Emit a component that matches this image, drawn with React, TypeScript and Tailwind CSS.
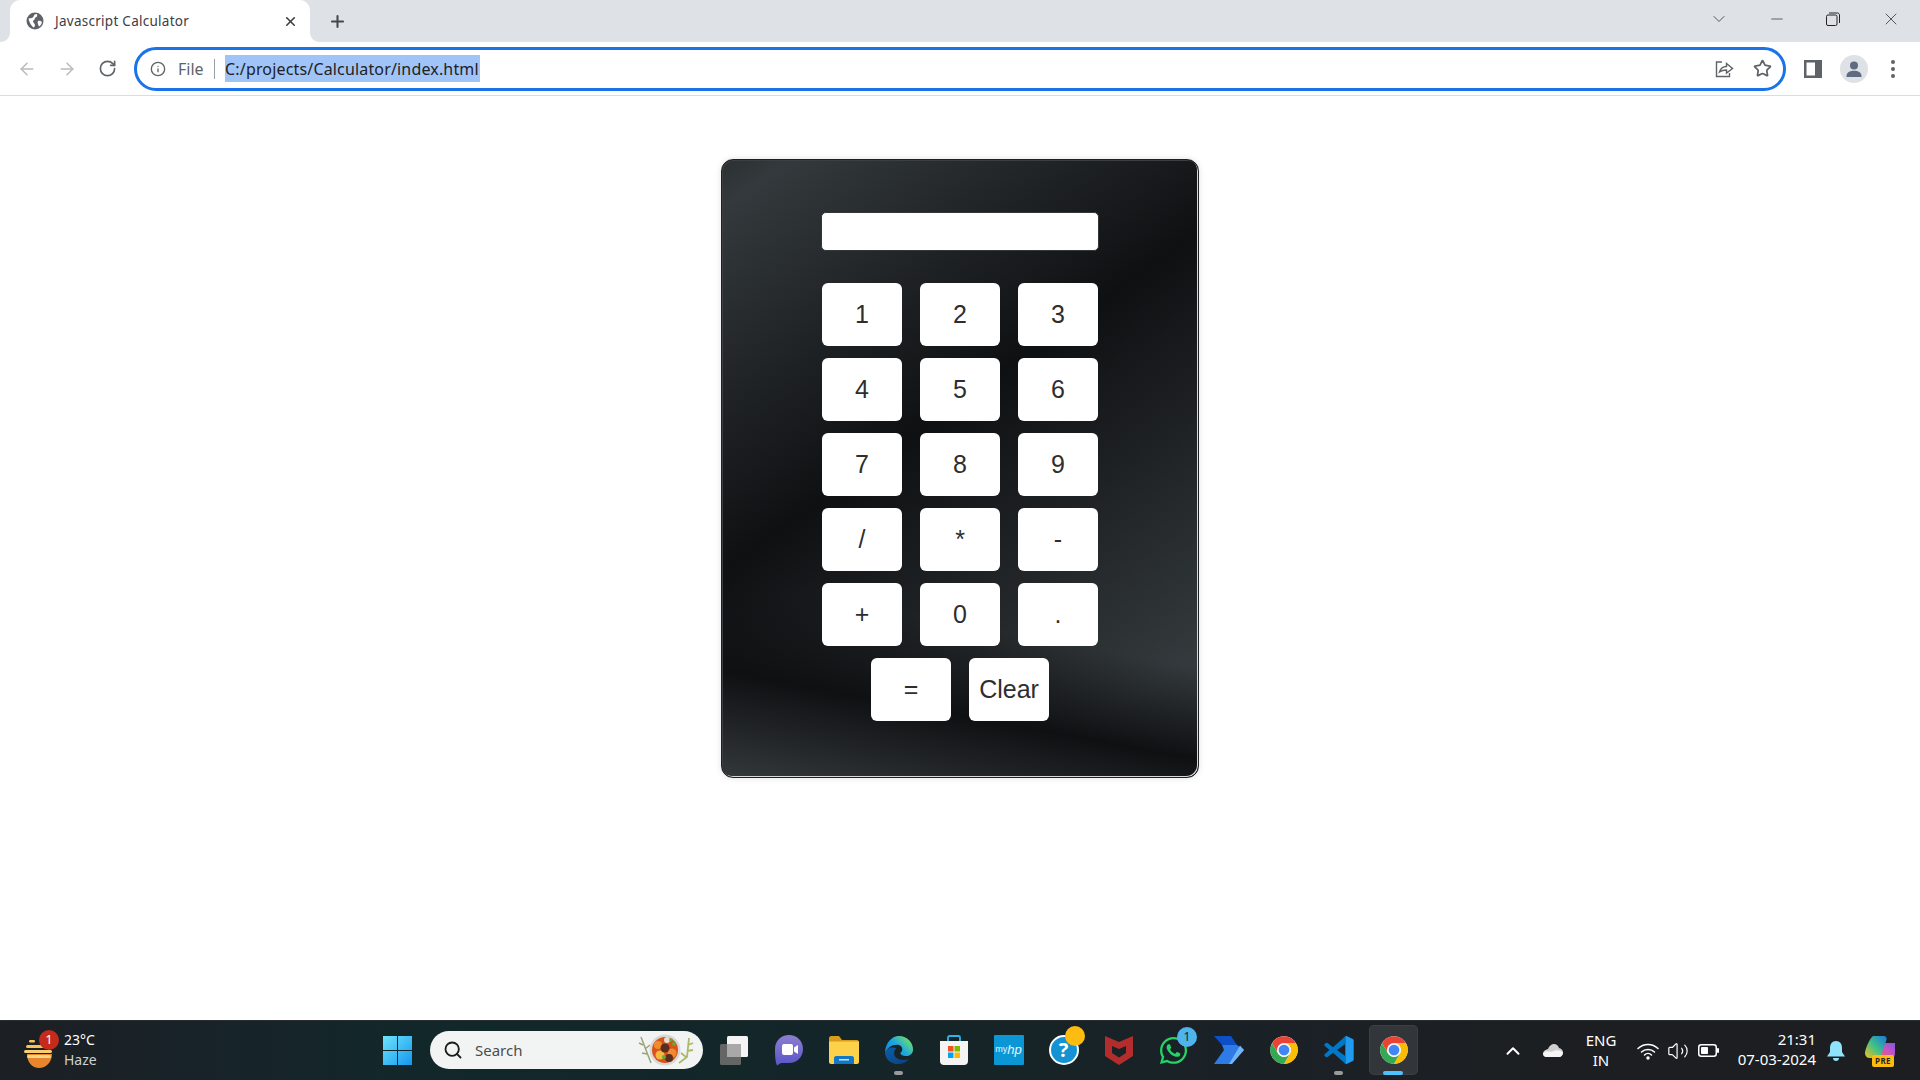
import { ArrowLeft, ArrowRight, RotateCw, Info, Star, ChevronDown, ChevronUp, Minus, X, Plus, Search, Volume2 } from "lucide-react";
import { FaWhatsapp } from "react-icons/fa";
import type { ReactNode } from "react";

const keys = ["1", "2", "3", "4", "5", "6", "7", "8", "9", "/", "*", "-", "+", "0", "."];

function Key({ label }: { label: string }) {
  return (
    <button className="w-[80px] h-[63px] rounded-[6px] bg-white text-[25px] text-[#2e2e2e] [font-family:'Liberation_Sans',Arial,sans-serif]">
      {label}
    </button>
  );
}

function Chrome({ size = 30 }: { size?: number }) {
  const red = "M24 2A22 22 0 0 1 43.05 13L24 13A11 11 0 0 0 14.47 29.5L4.95 13A22 22 0 0 1 24 2Z";
  return (
    <svg width={size} height={size} viewBox="0 0 48 48">
      <circle cx="24" cy="24" r="22" fill="#fff" />
      <path d={red} fill="#ea4335" />
      <path d={red} fill="#fbbc04" transform="rotate(120 24 24)" />
      <path d={red} fill="#34a853" transform="rotate(240 24 24)" />
      <circle cx="24" cy="24" r="11" fill="#f1f3f4" />
      <circle cx="24" cy="24" r="8.5" fill="#4285f4" />
    </svg>
  );
}

function Edge() {
  return (
    <svg width="30" height="30" viewBox="0 0 32 32">
      <defs>
        <linearGradient id="edgeA" x1="0" y1="1" x2="1" y2="0.3">
          <stop offset="0" stopColor="#0d79d0" />
          <stop offset="0.55" stopColor="#1fa7df" />
          <stop offset="1" stopColor="#6fe06a" />
        </linearGradient>
        <linearGradient id="edgeB" x1="0" y1="0" x2="1" y2="1">
          <stop offset="0" stopColor="#0c5ea8" />
          <stop offset="1" stopColor="#0b3f7f" />
        </linearGradient>
      </defs>
      <path d="M16 1C25 1 31 8 31 15.5C31 20 27.5 22.5 23.5 22.5C20 22.5 17.5 21 17.5 19.5C17.5 18.5 19.5 18 19.5 15.5C19.5 12 16.5 10.5 13.5 10.5C8 10.5 3.5 14 1 19.5C1 9 8 1 16 1Z" fill="url(#edgeA)" />
      <path d="M1 18C1 26 8 31 15 31C20 31 24 29 26.5 25.5C22 27 17 27 13.5 24.5C10 22 10 17 13 14C8 12 3 15 1 18Z" fill="url(#edgeB)" />
    </svg>
  );
}

function Store() {
  return (
    <svg width="30" height="32" viewBox="0 0 30 32">
      <path d="M9 8V3.5C9 2.5 9.8 2 10.5 2H19.5C20.2 2 21 2.5 21 3.5V8" fill="none" stroke="#2fb4ea" strokeWidth="1.8" />
      <path d="M1 7H29V27C29 29.5 27.5 31 25 31H5C2.5 31 1 29.5 1 27Z" fill="#f4f4f4" />
      <rect x="9" y="12" width="5.5" height="5.5" fill="#f25022" />
      <rect x="15.5" y="12" width="5.5" height="5.5" fill="#7fba00" />
      <rect x="9" y="18.5" width="5.5" height="5.5" fill="#00a4ef" />
      <rect x="15.5" y="18.5" width="5.5" height="5.5" fill="#ffb900" />
    </svg>
  );
}

function Tile({ children, dot, active }: { children: ReactNode; dot?: boolean; active?: boolean }) {
  return (
    <div className="relative w-[55px] h-[60px] flex items-center justify-center">
      {active && <div className="absolute left-[3px] top-[4px] w-[49px] h-[50px] rounded-[5px] bg-white/10 border border-white/5" />}
      <div className="relative flex items-center justify-center mt-[-1px]">{children}</div>
      {dot && <div className="absolute bottom-[6px] left-[23px] w-[9px] h-[4px] rounded-full bg-[#9a9a9a]" />}
      {active && <div className="absolute bottom-[6px] left-[17px] w-[20px] h-[4px] rounded-full bg-[#4cc2ff]" />}
    </div>
  );
}

export default function App() {
  return (
    <div className="w-[1920px] h-[1080px] flex flex-col overflow-hidden bg-white [font-family:'Noto_Sans',sans-serif]">
      {/* tab strip */}
      <div className="h-[42px] shrink-0 bg-[#dee1e6] flex items-end pl-[10px] text-[#202124]">
        <div className="relative w-[300px] h-[42px] mt-auto bg-white rounded-t-[10px] flex items-center">
          <svg className="absolute left-[-10px] bottom-0" width="10" height="10" viewBox="0 0 10 10"><path d="M10 0V10H0C6 10 10 6 10 0Z" fill="#fff" /></svg>
          <svg className="absolute right-[-10px] bottom-0" width="10" height="10" viewBox="0 0 10 10"><path d="M0 0V10H10C4 10 0 6 0 0Z" fill="#fff" /></svg>
          <svg className="ml-[16px]" width="18" height="18" viewBox="0 0 18 18">
            <circle cx="9" cy="9" r="8.5" fill="#5f6368" />
            <path d="M2.5 6.5L6 6C7 5.5 8 4 8.5 2.5L11 2C11.5 3.5 11 5 9.5 5.5C8.5 6 9 7.5 8 8C7 8.5 6.5 9 7.5 10.5C8 11.5 9 12 9 13.5L8 15.5C6 15 3.5 11 2.5 6.5Z" fill="#fff" />
            <path d="M12 9C13.5 8.5 15 9 16 10C15.5 12 14.5 13.5 13 14.5C12.5 13 11 11 12 9Z" fill="#fff" />
          </svg>
          <span className="ml-[11px] text-[13.5px] text-[#3c4043] tracking-[0.02em]">Javascript Calculator</span>
          <X className="ml-auto mr-[12px] text-[#3c4043]" size={15} strokeWidth={2.6} />
        </div>
        <div className="w-[56px] h-[42px] flex items-center justify-center">
          <Plus className="text-[#45484c] ml-[-1px]" size={19} strokeWidth={2.6} />
        </div>
        <div className="ml-auto h-[38px] self-start flex items-center text-[#3a3a3a]">
          <ChevronDown size={20} strokeWidth={1} className="mr-[39px]" />
          <Minus size={18} strokeWidth={1} className="mr-[40px]" />
          <svg className="mr-[41px]" width="14" height="14" viewBox="0 0 14 14" fill="none" stroke="#222" strokeWidth="1">
            <rect x="0.5" y="3" width="10.5" height="10.5" rx="1.5" />
            <path d="M3 1H11.5C12.5 1 13.5 2 13.5 3V11" />
          </svg>
          <X size={20} strokeWidth={1} className="mr-[19px]" />
        </div>
      </div>

      {/* toolbar */}
      <div className="h-[54px] shrink-0 bg-white border-b border-[#dadce0] flex items-center">
        <div className="w-[134px] shrink-0 flex items-center pl-[7px]">
          <div className="w-[40px] flex justify-center"><ArrowLeft size={20} strokeWidth={1.8} className="text-[#b9bbbe]" /></div>
          <div className="w-[40px] flex justify-center"><ArrowRight size={20} strokeWidth={1.8} className="text-[#b9bbbe]" /></div>
          <div className="w-[41px] flex justify-center"><RotateCw size={19} strokeWidth={2.1} className="text-[#5f6368]" /></div>
        </div>
        <div className="w-[1652px] h-[44px] shrink-0 rounded-full border-[3px] border-[#1a73e8] flex items-center">
          <Info size={16} strokeWidth={2} className="ml-[13px] text-[#5f6368]" />
          <span className="ml-[12px] text-[16px] text-[#5f6368]">File</span>
          <div className="ml-[10px] w-[1.5px] h-[20px] bg-[#9aa0a6]" />
          <span className="ml-[10px] h-[27px] flex items-center bg-[#a0c4f7] text-[16px] text-[#202124] w-[255px] whitespace-nowrap tracking-[0.01em]">C:/projects/Calculator/index.html</span>
          <svg className="ml-auto" width="20" height="20" viewBox="0 0 20 20" fill="none" stroke="#5f6368" strokeWidth="1.4">
            <path d="M8 3H2.5V17.5H15.5V14" />
            <path d="M5.5 13C6.5 9.5 9 7.5 12.5 7.5V4.5L18.5 9.5L12.5 14V11C9.5 11 7.5 11.5 5.5 13Z" />
          </svg>
          <Star className="ml-[19px] mr-[11px] text-[#5f6368]" size={19} strokeWidth={2.2} />
        </div>
        <svg className="ml-[18px]" width="18" height="18" viewBox="0 0 18 18">
          <path d="M0 0H18V18H0Z" fill="#5f6368" />
          <path d="M2.5 2.5H11V15.5H2.5Z" fill="#fff" />
        </svg>
        <div className="ml-[18px] w-[28px] h-[28px] rounded-full bg-[#dee1e6] flex items-center justify-center">
          <svg width="18" height="18" viewBox="0 0 18 18" fill="#5f6b80">
            <circle cx="9" cy="5.5" r="4" />
            <path d="M1.5 16C1.5 12.5 5 10.8 9 10.8C13 10.8 16.5 12.5 16.5 16V17H1.5Z" />
          </svg>
        </div>
        <div className="ml-[23px] flex flex-col gap-[3px]">
          <div className="w-[4px] h-[4px] rounded-full bg-[#5f6368]" />
          <div className="w-[4px] h-[4px] rounded-full bg-[#5f6368]" />
          <div className="w-[4px] h-[4px] rounded-full bg-[#5f6368]" />
        </div>
      </div>

      {/* page */}
      <div className="flex-1 bg-white flex justify-center items-start pt-[63px]">
        <div className="w-[478px] h-[619px] rounded-[12px] border border-[#1e1f21] shadow-[inset_-1px_-1px_0_0_#d8d8d8,inset_1px_1px_0_0_#3c3f42,0_0_6px_rgba(0,0,0,0.12)] bg-[linear-gradient(190.5deg,transparent_72%,#0f1012_85%,#33383b_100%),linear-gradient(144.6deg,#2c3033_0%,#33393c_5%,#0f1012_43%,#33393c_87%,#33393c_100%)] flex flex-col items-center pt-[52px]">
          <div className="w-[278px] h-[39px] rounded-[5px] bg-white border border-[#34373a]" />
          <div className="mt-[32px] grid grid-cols-[80px_80px_80px] gap-x-[18px] gap-y-[12px]">
            {keys.map((k) => (
              <Key key={k} label={k} />
            ))}
          </div>
          <div className="mt-[12px] flex gap-[18px]">
            <Key label="=" />
            <Key label="Clear" />
          </div>
        </div>
      </div>

      {/* taskbar */}
      <div className="h-[60px] shrink-0 flex items-center border-t border-[#2a2d30] bg-[linear-gradient(90deg,#1c1f23_0%,#17242a_12%,#11282a_25%,#142528_45%,#1a2126_65%,#1c1f22_80%,#1c1e21_100%)] text-white">
        <div className="w-[369px] shrink-0 flex items-center pl-[24px]">
          <div className="relative w-[30px] h-[34px]">
            <svg className="absolute left-0 top-[6px]" width="30" height="28" viewBox="0 0 30 28">
              <path d="M3 14H28C28 22 22 28 15 28C8 28 3 22 3 14Z" fill="#e8862b" />
              <rect x="5" y="0" width="6" height="2.5" rx="1.2" fill="#f6c35b" />
              <rect x="2" y="5" width="22" height="3" rx="1.5" fill="#f4c35d" />
              <rect x="0" y="10" width="28" height="3" rx="1.5" fill="#f6cf72" />
              <rect x="3" y="15" width="24" height="3" rx="1.5" fill="#f6d685" />
            </svg>
            <div className="absolute left-[15px] top-[-4px] w-[20px] h-[20px] rounded-full bg-[#c42b1c] flex items-center justify-center text-[13px] text-white">1</div>
          </div>
          <div className="ml-[10px] flex flex-col text-[14px] leading-[20px] mt-[-2px]">
            <span className="text-white">23°C</span>
            <span className="text-[#d0d0d0]">Haze</span>
          </div>
        </div>
        <div className="w-[56px] shrink-0 flex justify-center">
          <svg width="29" height="29" viewBox="0 0 29 29">
            <defs>
              <linearGradient id="winG" x1="0" y1="0" x2="1" y2="1">
                <stop offset="0" stopColor="#6fe3fb" />
                <stop offset="1" stopColor="#1497ee" />
              </linearGradient>
            </defs>
            <path d="M0 0H14V14H0ZM15 0H29V14H15ZM0 15H14V29H0ZM15 15H29V29H15Z" fill="url(#winG)" />
          </svg>
        </div>
        <div className="ml-[5px] w-[273px] h-[38px] shrink-0 rounded-full bg-[#f2f4f3] flex items-center text-[#3f4143] mt-[-1px]">
          <Search className="ml-[13px] text-[#1b1b1b]" size={20} strokeWidth={2.2} />
          <span className="ml-[12px] text-[15px] text-[#4b4d4f]">Search</span>
          <svg className="ml-auto mr-[6px]" width="60" height="34" viewBox="0 0 60 34">
            <path d="M4 4L14 30M6 12L2 10M8 16L13 12M10 21L5 20" stroke="#9aa37a" strokeWidth="1.5" fill="none" />
            <path d="M52 5L50 24L42 30M51 12L56 10M50 18L56 17M49 24L44 20" stroke="#aeb86a" strokeWidth="1.8" fill="none" />
            <circle cx="28" cy="17" r="15.5" fill="#d8d8d8" />
            <circle cx="28" cy="17" r="13" fill="#d9521c" />
            <circle cx="23" cy="22" r="4.5" fill="#f4b740" />
            <circle cx="35" cy="20" r="4.5" fill="#f08a2c" />
            <circle cx="21" cy="12" r="4" fill="#ef8d2d" />
            <circle cx="28" cy="15" r="4.5" fill="#5b2c20" />
            <circle cx="32" cy="25" r="4" fill="#5b2c20" />
            <circle cx="30" cy="7" r="3" fill="#e8ddd0" />
            <circle cx="37" cy="11" r="2" fill="#69a832" />
            <circle cx="27" cy="24" r="2" fill="#69a832" />
            <circle cx="34" cy="7" r="1.8" fill="#69a832" />
          </svg>
        </div>
        <div className="ml-[3px] flex shrink-0">
          <Tile>
            <svg width="30" height="30" viewBox="0 0 30 30">
              <rect x="8" y="1" width="21" height="21" rx="1.5" fill="#f4f4f4" />
              <rect x="1" y="9" width="21" height="21" rx="1.5" fill="#6b6b6b" fillOpacity="0.92" />
              <rect x="8" y="9" width="14" height="13" fill="#a8a8a8" />
            </svg>
          </Tile>
          <Tile>
            <svg width="30" height="32" viewBox="0 0 30 32">
              <defs>
                <linearGradient id="tmG" x1="0" y1="0" x2="0" y2="1">
                  <stop offset="0" stopColor="#8c7fd0" />
                  <stop offset="1" stopColor="#5a55c8" />
                </linearGradient>
              </defs>
              <path d="M15 1C23 1 29 7 29 15C29 23 23 29 15 29H7L3 31.5C2 29 1 26 1 15C1 7 7 1 15 1Z" fill="url(#tmG)" />
              <rect x="8" y="10" width="11" height="11" rx="2" fill="#fff" />
              <path d="M20 13.5L24 11V20L20 17.5Z" fill="#fff" />
            </svg>
          </Tile>
          <Tile>
            <svg width="30" height="28" viewBox="0 0 30 28">
              <path d="M0 2C0 1 1 0 2 0H10L13 4H28C29 4 30 5 30 6V10H0Z" fill="#d99c1c" />
              <path d="M0 5.5H30V26C30 27 29 28 28 28H2C1 28 0 27 0 26Z" fill="#fdd14a" />
              <path d="M5 22C5 21 6 20 7 20H23C24 20 25 21 25 22V28H5Z" fill="#1377c8" />
              <rect x="10" y="23" width="10" height="1.5" fill="#bfe3fa" />
            </svg>
          </Tile>
          <Tile dot><Edge /></Tile>
          <Tile><Store /></Tile>
          <Tile>
            <div className="w-[30px] h-[30px] bg-[#0b97d6] flex items-center justify-center rounded-[1px] [font-family:'Liberation_Sans',sans-serif] text-white/90">
              <span className="text-[9px]">my</span>
              <span className="text-[13px] italic">hp</span>
            </div>
          </Tile>
          <Tile>
            <div className="relative w-[30px] h-[30px]">
              <div className="w-[30px] h-[30px] rounded-full bg-[#1393d3] border-2 border-white flex items-center justify-center text-[20px] font-bold leading-none text-white">?</div>
              <div className="absolute right-[-6px] top-[-9px] w-[20px] h-[20px] rounded-full bg-[#fdbc0f]" />
            </div>
          </Tile>
          <Tile>
            <svg width="28" height="30" viewBox="0 0 28 30">
              <path fillRule="evenodd" d="M0 1L14 7L28 1V21L14 30L0 21ZM7 11V18L14 22.5L21 18V11L14 14Z" fill="#b42d2c" />
            </svg>
          </Tile>
          <Tile>
            <div className="relative">
              <FaWhatsapp size={31} color="#25d366" />
              <div className="absolute right-[-8px] top-[-8px] w-[20px] h-[20px] rounded-full bg-[#4fb4ee] flex items-center justify-center text-[12px] text-[#10242c]">1</div>
            </div>
          </Tile>
          <Tile>
            <svg width="30" height="28" viewBox="0 0 30 28">
              <path d="M0 0H17L23 9L8 9Z" fill="#0c4fc6" />
              <path d="M8 9H23L30 14L17 28H0L10 14Z" fill="#2e7be8" />
              <path d="M15 28L26 9.5L30 14L18 28Z" fill="#74b4f8" />
            </svg>
          </Tile>
          <Tile><Chrome /></Tile>
          <Tile dot>
            <svg width="30" height="30" viewBox="0 0 100 100">
              <path d="M75 3L96 13Q99 15 99 18V82Q99 85 96 87L75 97Q72 98 71 96V4Q72 2 75 3Z" fill="#1f9cf0" />
              <path d="M71 4L30 41L12 27Q9 25 6 27L2 31Q0 33 2 36L18 50L2 64Q0 67 2 69L6 73Q9 75 12 73L30 59L71 96V70L43 50L71 30Z" fill="#0078c8" />
            </svg>
          </Tile>
          <Tile active><Chrome /></Tile>
        </div>
        <div className="ml-[72px] flex items-center shrink-0">
          <div className="w-[40px] flex justify-center"><ChevronUp size={22} strokeWidth={2.2} className="text-white" /></div>
          <div className="w-[40px] flex justify-center">
            <svg width="20" height="13" viewBox="0 0 20 13">
              <path d="M5 5C6 2 8.5 0 11 0C13.5 0 15.5 2 16 4C18 4.2 20 6 20 8.5C20 11 18 13 16 13H3.5C1.5 13 0 11.5 0 9.5C0 7.5 2 5.5 5 5Z" fill="#cfcfcf" />
              <path d="M0 9.5C2 6.5 6 7 8 8L12 6.5C15 6 18 7 20 8.5C20 11 18 13 16 13H3.5C1.5 13 0 11.5 0 9.5Z" fill="#f5f5f5" />
            </svg>
          </div>
          <div className="w-[54px] text-center text-[15px] leading-[20px] text-white ml-[1px] mr-[-1px] mt-[-2px]">ENG<br />IN</div>
          <div className="ml-[6px] w-[30px] flex justify-center">
            <svg width="22" height="18" viewBox="0 0 22 18" fill="none" stroke="#fff" strokeWidth="1.5" strokeLinecap="round">
              <path d="M1 6.5C6.5 1 15.5 1 21 6.5" />
              <path d="M4.5 10C8 6.5 14 6.5 17.5 10" />
              <path d="M7.5 13C9.5 11 12.5 11 14.5 13" />
              <circle cx="11" cy="16" r="1" fill="#fff" />
            </svg>
          </div>
          <div className="w-[30px] flex justify-center"><Volume2 size={22} strokeWidth={1.3} className="text-white" /></div>
          <div className="w-[30px] flex justify-center">
            <svg width="21" height="13" viewBox="0 0 21 13">
              <rect x="0.75" y="0.75" width="17.5" height="11.5" rx="2.5" fill="none" stroke="#fff" strokeWidth="1.5" />
              <rect x="3" y="3" width="7" height="7" rx="0.8" fill="#fff" />
              <rect x="19" y="4" width="2" height="5" rx="1" fill="#fff" />
            </svg>
          </div>
          <div className="w-[93px] text-right text-[15px] leading-[20px] text-white whitespace-nowrap mt-[-3px]">21:31<br />07-03-2024</div>
          <div className="w-[39px] flex justify-center">
            <svg width="18" height="20" viewBox="0 0 18 20" fill="#8fe3fb">
              <path d="M9 0C13 0 15 3 15 7V11L18 15.5H0L3 11V7C3 3 5 0 9 0Z" />
              <path d="M6 17H12C12 18.7 10.7 20 9 20C7.3 20 6 18.7 6 17Z" />
            </svg>
          </div>
          <div className="w-[50px] flex justify-center">
            <div className="relative w-[30px] h-[30px]">
              <svg width="30" height="24" viewBox="0 0 30 24">
                <defs>
                  <linearGradient id="cpA" x1="0" y1="1" x2="1" y2="0">
                    <stop offset="0" stopColor="#f4c21c" />
                    <stop offset="0.5" stopColor="#3bbf8a" />
                    <stop offset="1" stopColor="#1d74e0" />
                  </linearGradient>
                  <linearGradient id="cpB" x1="0" y1="1" x2="1" y2="0">
                    <stop offset="0" stopColor="#f06a4a" />
                    <stop offset="0.6" stopColor="#c653c4" />
                    <stop offset="1" stopColor="#7a5be0" />
                  </linearGradient>
                </defs>
                <path d="M30 7H19L12 24H24C27 24 30 21 30 17Z" fill="url(#cpB)" />
                <path d="M8 0H19C21 0 22 2 21.5 4L15 22H5C2 22 0 20 0 17C0 14 4 3 8 0Z" fill="url(#cpA)" />
              </svg>
              <div className="absolute left-[7px] bottom-[-1px] w-[22px] h-[12px] rounded-[2px] bg-[#fdbc0f] flex items-center justify-center text-[8px] font-bold tracking-[0.05em] leading-none text-[#222]">PRE</div>
            </div>
          </div>
        </div>
      </div>
    </div>
  );
}
